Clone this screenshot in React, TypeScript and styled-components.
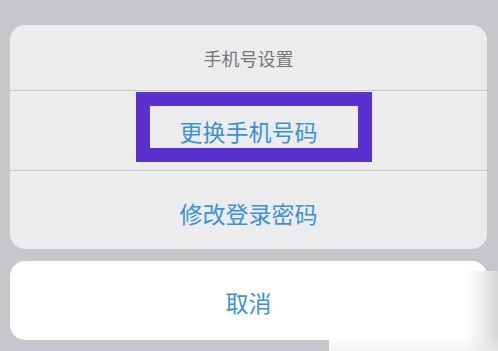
import React from 'react';
import styled, { createGlobalStyle } from 'styled-components';

const GlobalStyle = createGlobalStyle`
  html, body {
    margin: 0;
    padding: 0;
    background: #c6c7cb;
    font-family: 'Noto Sans CJK SC', 'Noto Sans', sans-serif;
  }
`;

const Sheet = styled.div`
  position: relative;
  width: 498px;
  height: 351px;
  box-sizing: border-box;
  padding: 25px 11px 0 10px;
  display: flex;
  flex-direction: column;
  gap: 12px;
  overflow: hidden;
`;

const Card = styled.div<{ $white?: boolean }>`
  background: ${(p) => (p.$white ? '#ffffff' : '#ececec')};
  border-radius: 15px;
  overflow: hidden;
  display: flex;
  flex-direction: column;
`;

const Title = styled.div`
  height: 65px;
  display: flex;
  align-items: center;
  justify-content: center;
  font-size: 18px;
  color: #777777;
  border-bottom: 1px solid #c9c9c9;
`;

const Action = styled.div<{ $last?: boolean; $h: number }>`
  position: relative;
  height: ${(p) => p.$h}px;
  display: flex;
  align-items: center;
  justify-content: center;
  font-size: 23px;
  color: #3b92d8;
  border-bottom: ${(p) => (p.$last ? 'none' : '1px solid #c9c9c9')};
`;

const Label = styled.span<{ $shift?: number }>`
  position: relative;
  top: ${(p) => p.$shift ?? 0}px;
`;

const Highlight = styled.div`
  position: absolute;
  left: 126px;
  top: 1px;
  width: 236px;
  height: 70px;
  box-sizing: border-box;
  border: 14px solid #5a30cf;
  pointer-events: none;
`;

const Watermark = styled.div`
  position: absolute;
  left: 329px;
  top: 271px;
  width: 169px;
  height: 80px;
  background:
    linear-gradient(to bottom, rgba(255, 255, 255, 0) 80%, rgba(236, 236, 238, 0.6) 100%),
    linear-gradient(
      to right,
      #ffffff 0%,
      #ffffff 80%,
      #f3f3f4 88%,
      #e2e3e5 95%,
      #d6d7d9 100%
    );
`;

export default function App() {
  return (
    <>
      <GlobalStyle />
      <Sheet>
        <Card>
          <Title>手机号设置</Title>
          <Action $h={79}>
            <Label $shift={0}>更换手机号码</Label>
            <Highlight />
          </Action>
          <Action $h={78} $last>
            <Label $shift={3}>修改登录密码</Label>
          </Action>
        </Card>
        <Card $white>
          <Action $h={79} $last>
            <Label $shift={1}>取消</Label>
          </Action>
        </Card>
        <Watermark />
      </Sheet>
    </>
  );
}
